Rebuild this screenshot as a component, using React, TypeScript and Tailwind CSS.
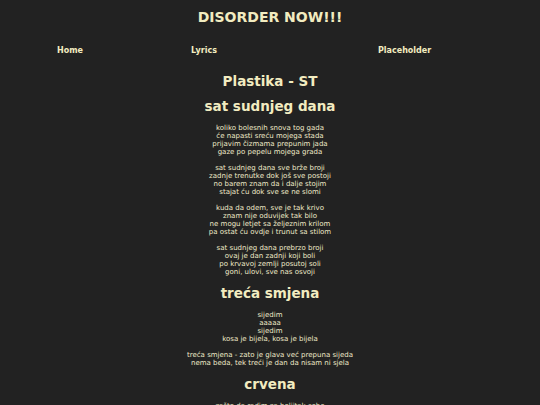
const songs = [
  {
    title: 'sat sudnjeg dana',
    stanzas: [
      ['koliko bolesnih snova tog gada', 'će napasti sreću mojega stada', 'prijavim čizmama prepunim jada', 'gaze po pepelu mojega grada'],
      ['sat sudnjeg dana sve brže broji', 'zadnje trenutke dok još sve postoji', 'no barem znam da i dalje stojim', 'stajat ću dok sve se ne slomi'],
      ['kuda da odem, sve je tak krivo', 'znam nije oduvijek tak bilo', 'ne mogu letjet sa željeznim krilom', 'pa ostat ću ovdje i trunut sa stilom'],
      ['sat sudnjeg dana prebrzo broji', 'ovaj je dan zadnji koji boli', 'po krvavoj zemlji posutoj soli', 'goni, ulovi, sve nas osvoji'],
    ],
  },
  {
    title: 'treća smjena',
    stanzas: [
      ['sijedim', 'aaaaa', 'sijedim', 'kosa je bijela, kosa je bijela'],
      ['treća smjena - zato je glava već prepuna sijeda', 'nema beda, tek treći je dan da nisam ni sjela'],
    ],
  },
  {
    title: 'crvena',
    stanzas: [['zašto da radim za boljitak sebe', 'kad nitko ne mari']],
  },
];

export default function App() {
  return (
    <div className="min-h-screen bg-[#222222] text-[#f2ecc0] font-['DejaVu_Sans',sans-serif] text-center overflow-hidden">
      <h1 className="pt-[9px] text-[14px] font-bold leading-[16px]">DISORDER NOW!!!</h1>

      <nav className="mt-[21px] flex pl-[57px] text-[8px] font-bold leading-[10px] text-left">
        <a className="w-[134px]">Home</a>
        <a className="w-[187px]">Lyrics</a>
        <a>Placeholder</a>
      </nav>

      <h2 className="mt-[17px] text-[13.5px] font-bold leading-[16px]">Plastika - ST</h2>

      {songs.map((song) => (
        <section key={song.title}>
          <h3 className="mt-[9px] mb-[10px] text-[13.5px] font-bold leading-[16px]">{song.title}</h3>
          {song.stanzas.map((stanza, i) => (
            <p key={i} className="mb-[8px] text-[7px] leading-[8px] text-[#eee9c8]">
              {stanza.map((line, j) => (
                <span key={j} className="block">{line}</span>
              ))}
            </p>
          ))}
        </section>
      ))}
    </div>
  );
}
